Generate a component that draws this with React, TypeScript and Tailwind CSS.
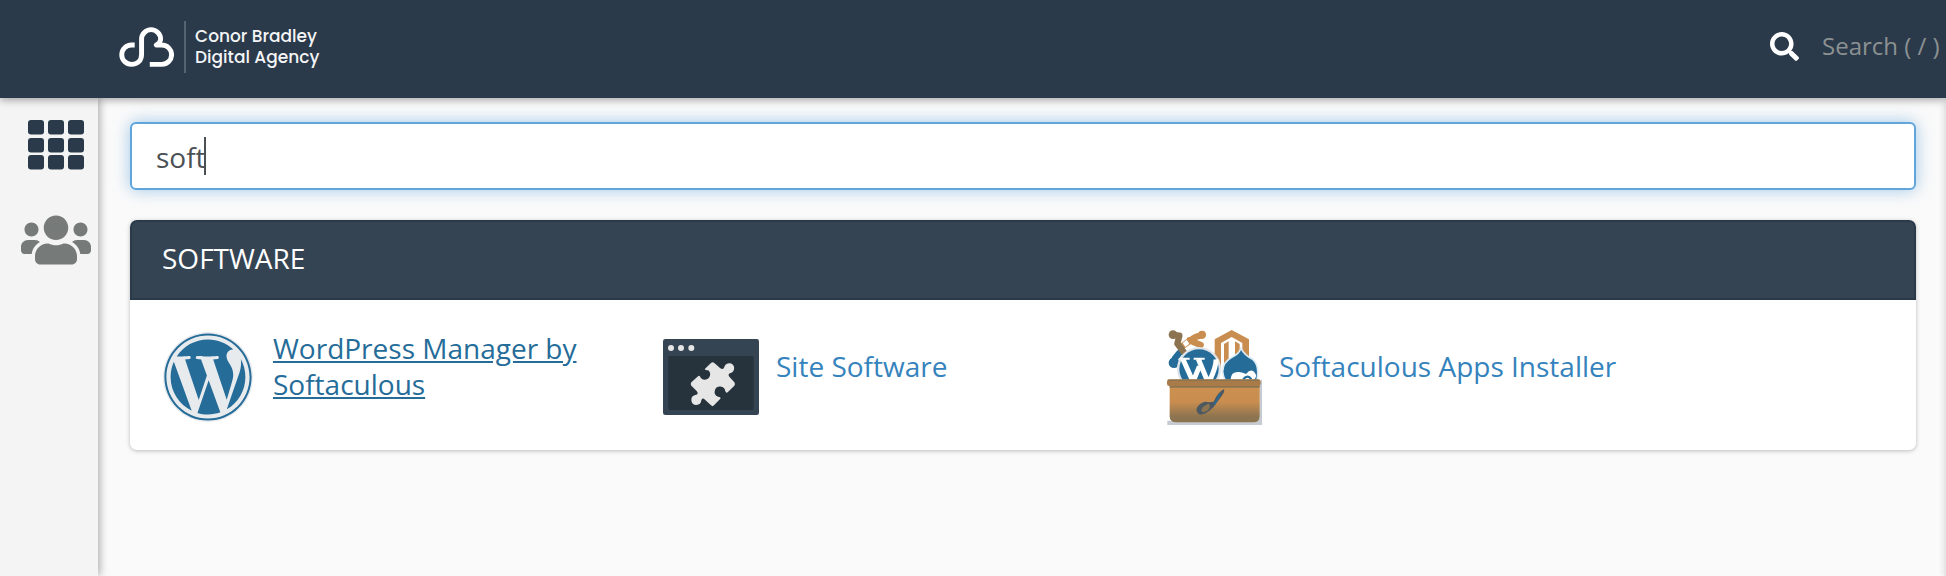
import { useState } from "react";
import type { ReactNode } from "react";
import { FaSearch, FaUsers, FaWordpress } from "react-icons/fa";

function BrandMark() {
  return (
    <svg viewBox="54 79 169 122" className="h-10 w-14" fill="none" aria-hidden="true">
      <path
        d="M104 134 H94 A29.500 29.500 0 0 0 94 193 C113 193 125 181 125 162 V116 A29 29 0 0 1 183 116 Q183 126 170 134 H187 A29.500 29.500 0 0 1 187 193 H150"
        stroke="#fff"
        strokeWidth="15"
        strokeLinejoin="round"
      />
    </svg>
  );
}

function GridIcon() {
  return (
    <svg viewBox="0 0 56 50" className="h-[50px] w-14" fill="#2b3a4a" aria-hidden="true">
      {[0, 18, 35].map((y) =>
        [0, 20, 40].map((x) => (
          <rect key={`${x}-${y}`} x={x} y={y} width="16" height="14.500" rx="3" />
        )),
      )}
    </svg>
  );
}

function WordPressIcon() {
  return (
    <span className="flex size-[90px] items-center justify-center rounded-full bg-[#e8ebee]">
      <FaWordpress className="size-[90px] text-[#256c99]" aria-hidden="true" />
    </span>
  );
}

function SiteSoftwareIcon() {
  return (
    <svg viewBox="0 0 288 228" className="h-[76px] w-24" aria-hidden="true">
      <rect width="288" height="228" rx="7" fill="#344453" />
      <rect x="16" y="51" width="256" height="162" rx="6" fill="#26323c" />
      <g fill="#e6e6e6">
        <circle cx="24" cy="27" r="9" />
        <circle cx="54" cy="27" r="9" />
        <circle cx="85" cy="27" r="9" />
        <path d="M144 72 Q149 67 154 72 L171 87 Q181 94 184 84 A15 15 0 1 1 203 102 Q193 105 199 113 L214 130 Q218 135 214 140 L194 160 Q189 163 187 157 A16 16 0 1 0 165 173 Q175 174 172 179 L153 199 Q149 204 144 199 L126 182 Q118 174 115 184 A15 15 0 1 1 97 168 Q109 165 101 156 L85 140 Q81 135 85 130 L106 111 Q110 108 113 116 A16 16 0 1 0 136 94 Q123 93 126 89 Z" />
      </g>
    </svg>
  );
}

function InstallerIcon() {
  return (
    <svg viewBox="0 0 288 288" className="size-24" aria-hidden="true">
      <defs>
        <linearGradient id="crate" x1="0" y1="0" x2="0" y2="1">
          <stop offset="0" stopColor="#cc9050" />
          <stop offset="0.450" stopColor="#c98d50" />
          <stop offset="0.850" stopColor="#8c7450" />
          <stop offset="1" stopColor="#8c7450" />
        </linearGradient>
        <clipPath id="above-crate">
          <rect width="288" height="152" />
        </clipPath>
      </defs>
      <path d="M4 275 V288 H288 V150 L280 160 V270 Z" fill="#c5cbd0" />
      <g clipPath="url(#above-crate)">
        <g fill="none" strokeLinecap="round" strokeLinejoin="round" strokeWidth="19">
          <path d="M26 102 L27 88 L40 72" stroke="#256c99" />
          <path d="M106 20 Q88 22 76 32 L48 52 M70 34 L104 48" stroke="#c98d50" />
          <path d="M22 18 L40 20 L34 44 L54 70" stroke="#8c7450" />
        </g>
        <path d="M50 42 L62 32 L70 44 L58 54 Z" fill="#fff" />
        <circle cx="21" cy="17" r="13" fill="#8c7450" />
        <circle cx="108" cy="17" r="12" fill="#c98d50" />
        <circle cx="24" cy="101" r="16" fill="#256c99" />
        <path d="M197 3 L249 31 V115 L229 124 V42 L197 24 L165 42 V119 L146 106 V31 Z" fill="#c98d50" />
        <path d="M174 45 L188 37 V114 H174 Z M207 37 L221 45 V114 H207 Z" fill="#c98d50" />
        <circle cx="99" cy="120" r="66" fill="#dfe5ea" />
        <circle cx="99" cy="120" r="59" fill="#256c99" />
        <g fill="none" stroke="#fff" strokeWidth="15">
          <path d="M51 91 L82 160 M97 90 L126 160 M100 112 L83 154 M150 91 Q151 112 132 153" />
        </g>
        <path d="M43 89 H71 M83 89 H116" stroke="#fff" strokeWidth="6" />
        <path d="M225 58 Q235 78 260 91 Q280 107 274 147 Q271 177 225 177 Q174 175 170 128 Q170 99 199 84 Q220 74 225 58 Z" fill="#256c99" stroke="#dcecf5" strokeWidth="5" />
        <path d="M194 151 Q195 127 219 129 Q232 130 240 135 Q256 116 267 132 Q276 145 260 155 H196 Z" fill="#fff" />
        <path d="M232 151 Q245 135 256 151" fill="none" stroke="#256c99" strokeWidth="7" />
      </g>
      <path d="M11 169 H281 V262 Q281 280 262 280 H31 Q11 280 11 262 Z" fill="url(#crate)" />
      <path d="M11 170 H281 V176 H11 Z" fill="#8c7450" />
      <rect x="3" y="151" width="281" height="20" rx="7" fill="#a97b49" />
      <path d="M6 154 H280" stroke="#8c7450" strokeWidth="4" />
      <path d="M174 180 Q178 187 165 204 L142 235 Q116 261 99 256 Q84 245 98 229 Q114 214 127 220 L143 218 Q154 191 174 180 Z" fill="#4c5962" />
      <path d="M130 224 Q136 243 113 250 Q104 249 107 240 Q113 228 130 224 Z" fill="#8c7450" />
      <path d="M163 194 L145 227" stroke="#256c99" strokeWidth="5" />
    </svg>
  );
}

type Tool = { name: string; icon: ReactNode; active?: boolean };

const tools: Tool[] = [
  { name: "WordPress Manager by Softaculous", icon: <WordPressIcon />, active: true },
  { name: "Site Software", icon: <SiteSoftwareIcon /> },
  { name: "Softaculous Apps Installer", icon: <InstallerIcon /> },
];

export default function App() {
  const [filter, setFilter] = useState("soft");
  const shown = tools.filter((tool) => `software ${tool.name}`.toLowerCase().includes(filter.toLowerCase()));

  return (
    <div className="flex min-h-screen flex-col bg-[#fafafa] font-['Open_Sans',sans-serif] text-[28px]">
      <header className="z-20 flex h-[98px] items-center justify-between bg-[#2b3a4a] pl-[118px] shadow-[0_2px_8px_rgba(0,0,0,0.35)]">
        <a href="#home" className="flex items-center pb-[5px] text-[#f4f5f6]">
          <BrandMark />
          <span className="ml-[10px] h-[52px] w-[2px] bg-[#566371]" />
          <span className="ml-[9px] flex flex-col font-[Poppins,Inter,sans-serif] text-[17px] leading-[21px] font-medium">
            <span>Conor Bradley</span>
            <span>Digital Agency</span>
          </span>
        </a>
        <label className="flex items-center gap-[23px] pb-[6px]">
          <FaSearch className="size-[29px] text-white" aria-hidden="true" />
          <input
            type="text"
            aria-label="Search"
            placeholder="Search ( / )"
            className="w-[124px] bg-transparent text-[24px] leading-9 text-white outline-none placeholder:text-[#8c9192]"
          />
        </label>
      </header>

      <div className="flex grow">
        <nav className="z-10 flex w-[98px] shrink-0 flex-col items-center gap-[42px] bg-[#f4f4f4] pt-[22px] pl-[14px] shadow-[2px_0_8px_rgba(0,0,0,0.3)]">
          <a href="#tools" aria-label="Tools">
            <GridIcon />
          </a>
          <a href="#users" aria-label="User manager">
            <FaUsers className="h-14 w-[70px] text-[#767a78]" aria-hidden="true" />
          </a>
        </nav>

        <main className="flex grow flex-col gap-[30px] px-8 pt-6 pr-7">
          <label className="flex h-[68px] items-center rounded-[6px] border-2 border-[#60a5dc] bg-white px-6 shadow-[0_0_16px_rgba(96,165,220,0.6)]">
            <input
              type="text"
              aria-label="Find functions quickly"
              value={filter}
              onChange={(event) => setFilter(event.target.value)}
              className="max-w-full min-w-px [field-sizing:content] bg-transparent pt-[2px] leading-10 text-[#4b5054] caret-transparent outline-none"
            />
            <span className="-ml-[2px] h-[38px] w-[2px] bg-[#4b5054]" />
          </label>

          <section className="rounded-[7px] bg-white shadow-[0_1px_4px_rgba(0,0,0,0.25)]">
            <h2 className="flex h-20 items-center rounded-t-[7px] border-2 border-[#2b3a4a] bg-[#344453] px-[30px] pb-1 text-white">
              SOFTWARE
            </h2>
            <ul className="flex flex-wrap px-[30px] pt-[29px] pb-[25px]">
              {shown.map((tool) => (
                <li key={tool.name} className="w-[503px]">
                  <a
                    href="#tool"
                    className={
                      tool.active
                        ? "flex h-24 items-center gap-[17px] pr-8 text-[#256c99] underline"
                        : "flex h-24 items-center gap-[17px] pr-8 text-[#3583bd]"
                    }
                  >
                    <span className="flex w-24 shrink-0 justify-center">{tool.icon}</span>
                    <span className="pb-[22px] leading-9">{tool.name}</span>
                  </a>
                </li>
              ))}
            </ul>
          </section>
        </main>
        <div className="w-[2px] shrink-0 bg-[#e6e6e6] shadow-[-1px_0_4px_rgba(0,0,0,0.15)]" />
      </div>
    </div>
  );
}
